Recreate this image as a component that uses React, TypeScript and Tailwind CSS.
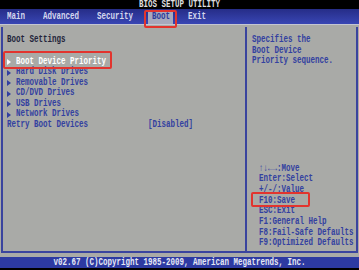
import React from "react"

// narrow BIOS-style glyphs: 10px mono squeezed to 75% width
function T({ children, className = "" }: { children: React.ReactNode; className?: string }) {
  return <span className={`block whitespace-pre text-[10px] scale-x-75 ${className}`}>{children}</span>
}

function Arrow({ white }: { white?: boolean }) {
  return (
    <svg width="4" height="6" viewBox="0 0 4 6" className="block mt-[2.5px]">
      <polygon points="0,0 4,3 0,6" fill={white ? "#ffffff" : "#3341a0"} />
    </svg>
  )
}

const drives = ["Hard Disk Drives", "Removable Drives", "CD/DVD Drives", "USB Drives", "Network Drives"]

const help = [
  "↑↓←→:Move",
  "Enter:Select",
  "+/-/:Value",
  "F10:Save",
  "ESC:Exit",
  "F1:General Help",
  "F8:Fail-Safe Defaults",
  "F9:Optimized Defaults",
]

export default function App() {
  return (
    <div className="relative w-[359px] h-[270px] overflow-hidden bg-[#a9aaa7] flex flex-col font-bold leading-none font-['Liberation_Mono',monospace]">
      {/* title */}
      <div className="h-[9px] shrink-0 bg-black overflow-hidden">
        <T className="origin-center text-center leading-[10px] text-[#dedede]">BIOS SETUP UTILITY</T>
      </div>

      {/* tabs */}
      <div className="h-[15px] shrink-0 flex pl-[7px] bg-gradient-to-b from-[#262d88] to-[#3946b4] text-[#d4d7ee]">
        <div className="w-[36px] shrink-0"><T className="origin-left leading-[15px]">Main</T></div>
        <div className="w-[54px] shrink-0"><T className="origin-left leading-[15px]">Advanced</T></div>
        <div className="w-[51px] shrink-0"><T className="origin-left leading-[15px]">Security</T></div>
        <div className="w-[25px] shrink-0 h-[13px] mt-[2px] pl-[4px] bg-[#a6a9bd] text-[#2c3a9c]">
          <T className="origin-left leading-[11px]">Boot</T>
        </div>
        <div className="w-[15px] shrink-0" />
        <div className="w-[30px] shrink-0"><T className="origin-left leading-[15px]">Exit</T></div>
      </div>

      <div className="h-[3px] shrink-0 border-t border-[#c4c6d2]" />

      {/* main frame */}
      <div className="ml-[1px] w-[357px] h-[226px] shrink-0 flex border-b-2 border-[#3a449e]">
        <div className="w-[246px] shrink-0 border-x-2 border-[#3a449e] pl-[4px] pt-[8px] flex flex-col">
          <div className="h-[10.5px] text-[#23253a]"><T className="origin-left leading-[10.5px]">Boot Settings</T></div>
          <div className="mt-[11px] flex flex-col text-[#3341a0]">
            <div className="h-[10.5px] flex">
              <div className="w-[9px] shrink-0"><Arrow white /></div>
              <T className="origin-left leading-[10.5px] text-white">Boot Device Priority</T>
            </div>
            {drives.map((d) => (
              <div key={d} className="h-[10.5px] flex">
                <div className="w-[9px] shrink-0"><Arrow /></div>
                <T className="origin-left leading-[10.5px]">{d}</T>
              </div>
            ))}
            <div className="h-[10.5px] flex">
              <div className="w-[141px] shrink-0"><T className="origin-left leading-[10.5px]">Retry Boot Devices</T></div>
              <T className="origin-left leading-[10.5px]">[Disabled]</T>
            </div>
          </div>
        </div>

        <div className="w-[111px] shrink-0 border-r-2 border-[#3a449e] pt-[8px] pb-[2px] flex flex-col justify-between text-[#3341a0]">
          <div className="pl-[5px] flex flex-col">
            {["Specifies the", "Boot Device", "Priority sequence."].map((l) => (
              <div key={l} className="h-[10.5px]"><T className="origin-left leading-[10.5px]">{l}</T></div>
            ))}
          </div>
          <div className="pl-[12px] flex flex-col">
            {help.map((l) => (
              <div key={l} className="h-[10.7px]"><T className="origin-left leading-[10.7px]">{l}</T></div>
            ))}
          </div>
        </div>
      </div>

      <div className="h-[4px] shrink-0" />

      {/* footer */}
      <div className="h-[11px] shrink-0 bg-[#2d3aa2] overflow-hidden">
        <T className="origin-center text-center leading-[11px] text-[#e6e8f4]">v02.67 (C)Copyright 1985-2009, American Megatrends, Inc.</T>
      </div>
      <div className="h-[2px] shrink-0 bg-black" />

      {/* red highlight boxes */}
      <div className="absolute left-[144px] top-[10px] w-[33px] h-[18px] border-2 border-[#e2342e] rounded-[2px]" />
      <div className="absolute left-[3px] top-[51px] w-[109px] h-[18px] border-2 border-[#e2342e] rounded-[2px]" />
      <div className="absolute left-[251px] top-[192px] w-[59px] h-[15px] border-2 border-[#e2342e] rounded-[2px]" />
    </div>
  )
}
